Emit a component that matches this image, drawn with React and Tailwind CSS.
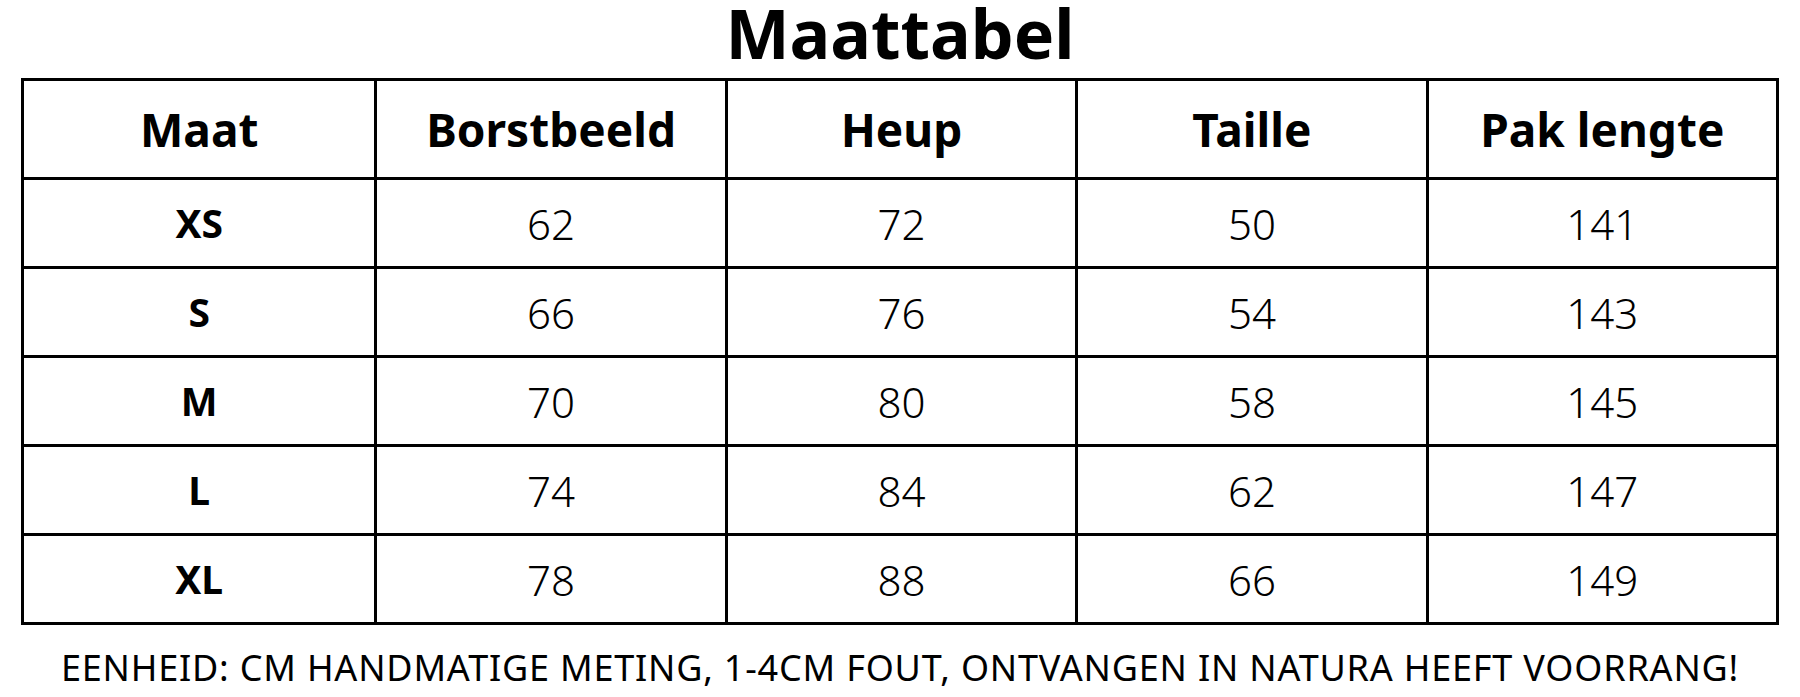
const headers = ["Maat", "Borstbeeld", "Heup", "Taille", "Pak lengte"];

const rows = [
  ["XS", "62", "72", "50", "141"],
  ["S", "66", "76", "54", "143"],
  ["M", "70", "80", "58", "145"],
  ["L", "74", "84", "62", "147"],
  ["XL", "78", "88", "66", "149"],
];

const App = () => {
  return (
    <div
      className="w-[1800px] h-[697px] bg-white text-black overflow-hidden"
      style={{ fontFamily: '"Noto Sans", "Open Sans", sans-serif' }}
    >
      {/* TITLE */}
      <h1 className="h-[78px] text-center text-[68px] font-bold leading-[66px]">
        Maattabel
      </h1>

      {/* TABLE */}
      <div className="ml-[21px] w-[1758px] border-[3px] border-black">
        <div className="grid grid-cols-5 h-[96px]">
          {headers.map((h, i) => (
            <div
              key={h}
              className={`flex items-center justify-center text-[46px] font-bold ${
                i > 0 ? "border-l-[3px] border-black" : ""
              }`}
            >
              {h}
            </div>
          ))}
        </div>

        {rows.map((row) => (
          <div
            key={row[0]}
            className="grid grid-cols-5 h-[89px] border-t-[3px] border-black"
          >
            {row.map((cell, i) => (
              <div
                key={i}
                className={`flex items-center justify-center ${
                  i === 0
                    ? "text-[39px] font-bold"
                    : "text-[42px] font-light border-l-[3px] border-black"
                }`}
              >
                {cell}
              </div>
            ))}
          </div>
        ))}
      </div>

      {/* FOOTER NOTE */}
      <p className="mt-[23px] text-center text-[36px] leading-[40px] tracking-[0.8px]">
        EENHEID: CM HANDMATIGE METING, 1-4CM FOUT, ONTVANGEN IN NATURA HEEFT VOORRANG!
      </p>
    </div>
  );
};

export default App;
